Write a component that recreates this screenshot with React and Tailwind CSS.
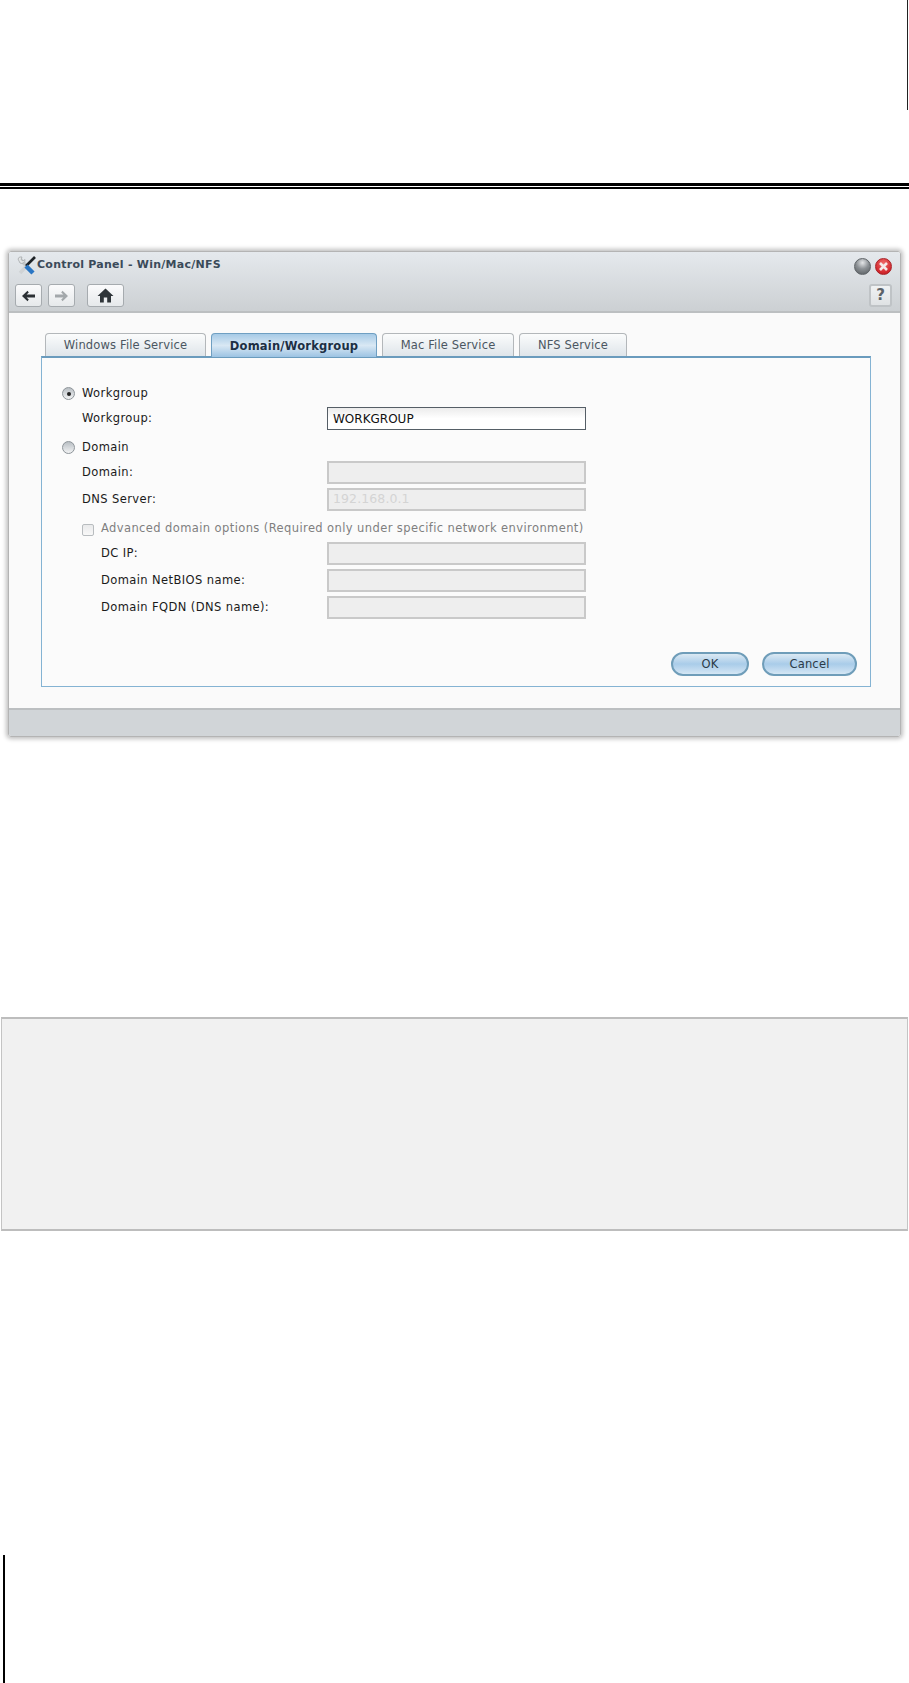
import React from "react";

const Tab = ({ label, active, w }) => (
  <div
    className={
      active
        ? "relative z-10 h-[24px] pt-[2px] flex items-center justify-center rounded-t-[4px] border border-b-0 border-[#6f9fc2] bg-gradient-to-b from-[#a6cae6] via-[#d9e8f4] to-[#9cc3e3] font-bold text-[#1c2f44] text-[11.5px] tracking-[0.2px]"
        : "h-[23px] pt-[2px] flex items-center justify-center rounded-t-[4px] border border-b-0 border-[#b3b7ba] bg-gradient-to-b from-[#fbfcfc] to-[#dfe5ea] text-[#4b5661] text-[11.5px] tracking-[0.15px]"
    }
    style={{ width: w }}
  >
    {label}
  </div>
);

const Field = ({ value, disabled }) => (
  <div
    className={
      disabled
        ? "w-[259px] h-[23px] border-2 border-[#c9c9c9] bg-[#eeeeee] px-[4px] flex items-center text-[12.5px] tracking-[0.1px] text-[#d4d4d4]"
        : "w-[259px] h-[23px] border border-[#555e66] bg-gradient-to-b from-[#ececec] via-white to-white px-[5px] flex items-center text-[12px] text-[#111]"
    }
  >
    {value}
  </div>
);

const Row = ({ label, value, disabled, indent = "pl-[40px]", mt = "mt-0" }) => (
  <div className={`flex items-center h-[23px] ${mt}`}>
    <div className={`w-[285px] ${indent} pt-px text-[11.5px] tracking-[0.4px] text-[#1a1a1a]`}>{label}</div>
    <Field value={value} disabled={disabled} />
  </div>
);

const Radio = ({ checked }) => (
  <div className="w-[13px] h-[13px] -translate-y-[2px] rounded-full border border-[#8d9499] bg-gradient-to-b from-[#b9bfc4] to-[#f2f3f4] flex items-center justify-center">
    {checked && <div className="w-[4px] h-[4px] rounded-full bg-[#222]" />}
  </div>
);

const ToolBtn = ({ w, children }) => (
  <div
    className="h-[23px] rounded-[3px] border border-[#a6abaf] bg-gradient-to-b from-[#fbfbfc] to-[#e6e9eb] flex items-center justify-center"
    style={{ width: w }}
  >
    {children}
  </div>
);

const Arrow = ({ color, flip }) => (
  <svg width="15" height="12" viewBox="0 0 15 12" className={flip ? "-scale-x-100" : ""}>
    <path d="M6.5 0.8 L1 6 L6.5 11.2 L7.8 9.6 L5.6 7.5 H14 V4.5 H5.6 L7.8 2.4 Z" fill={color} />
  </svg>
);

const Pill = ({ w, label }) => (
  <div
    className="h-[24px] pt-px rounded-full border-2 border-[#6f9db9] bg-gradient-to-b from-[#dbe9f3] via-[#a9cce9] to-[#d4e6f4] flex items-center justify-center text-[11.5px] tracking-[0.2px] text-[#2b3a47]"
    style={{ width: w }}
  >
    {label}
  </div>
);

export default function App() {
  return (
    <div className="w-[909px] h-[1683px] bg-white overflow-hidden flex flex-col" style={{ fontFamily: '"DejaVu Sans", sans-serif' }}>
      <div className="h-[110px] w-px self-end mr-[1px] bg-[#222]" />
      <div className="mt-[73px] h-[3px] bg-black" />
      <div className="mt-px h-[2px] bg-black" />

      <div className="mt-[62px] ml-[8px] w-[893px] h-[486px] rounded-[3px] border border-[#b4b4b4] shadow-[0_0_4px_2px_rgba(0,0,0,0.25)] flex flex-col overflow-hidden">
        <div className="h-[61px] shrink-0 border-b-2 border-[#bcbfc1] bg-gradient-to-b from-[#e5e9ed] to-[#ccd0d3] flex flex-col pl-[6px] pr-[8px] pt-[3px]">
          <div className="flex items-center h-[22px]">
            <svg width="19" height="20" viewBox="0 0 19 20" className="ml-[2px]">
              <path d="M3.5 3.5 L15 16" stroke="#c4c8ca" strokeWidth="3.5" />
              <path d="M3 17 L10 9.5" stroke="#d0d3d5" strokeWidth="3.5" />
              <path d="M1 3 A3.2 3.2 0 0 1 5 1 L4 3.5 L6 5 L8 3.5 A3.4 3.4 0 0 1 3 7 Z" fill="#e4e6e7" stroke="#a4a8ab" strokeWidth="0.8" />
              <path d="M18 1 L9 10" stroke="#1d2226" strokeWidth="2.6" />
              <path d="M9 10 L16 17" stroke="#2a76c4" strokeWidth="4.5" />
            </svg>
            <span className="ml-px pb-[2px] text-[11px] font-bold tracking-[0.25px] text-[#3a4a59]">Control Panel - Win/Mac/NFS</span>
            <div className="ml-auto flex items-center gap-[4px]">
              <div className="w-[17px] h-[17px] rounded-full border border-[#5f6468] bg-[radial-gradient(circle_at_50%_25%,#e4e6e8_0%,#8d9296_45%,#53585c_100%)]" />
              <div className="w-[17px] h-[17px] rounded-full border border-[#a82026] bg-[radial-gradient(circle_at_50%_30%,#ef6a6a_0%,#d3282e_70%,#a8171c_100%)] flex items-center justify-center">
                <svg width="11" height="11" viewBox="0 0 11 11">
                  <path d="M2 2 L9 9 M9 2 L2 9" stroke="#f5e9e9" strokeWidth="2.6" />
                </svg>
              </div>
            </div>
          </div>
          <div className="flex items-center mt-[7px]">
            <ToolBtn w="27px"><Arrow color="#2b3034" /></ToolBtn>
            <div className="ml-[6px]"><ToolBtn w="27px"><Arrow color="#a3a8ab" flip /></ToolBtn></div>
            <div className="ml-[12px]">
              <ToolBtn w="37px">
                <svg width="17" height="15" viewBox="0 0 17 15">
                  <path d="M8.5 0.5 L16.5 8 H14 V14.5 H10.2 V9.5 H6.8 V14.5 H3 V8 H0.5 Z" fill="#2f3539" />
                </svg>
              </ToolBtn>
            </div>
            <div className="ml-auto">
              <div className="w-[23px] h-[23px] rounded-[3px] border-2 border-[#bfc3c6] bg-gradient-to-b from-[#f0f2f3] to-[#dfe2e4] flex items-center justify-center text-[15px] font-bold text-[#5b6268]">?</div>
            </div>
          </div>
        </div>

        <div className="flex-1 bg-[#fafafa] pl-[32px] pt-[20px]">
          <div className="flex items-start gap-[5px] pl-[4px] h-[23px]">
            <Tab label="Windows File Service" w="161px" />
            <Tab label="Domain/Workgroup" w="166px" active />
            <Tab label="Mac File Service" w="132px" />
            <Tab label="NFS Service" w="108px" />
          </div>
          <div className="w-[830px] h-[331px] border border-[#84b3d3] border-t-2 border-t-[#6a9bbd] bg-[#fbfbfb] pt-[26px] flex flex-col">
            <div className="flex items-center h-[23px] pl-[20px]">
              <Radio checked />
              <span className="ml-[7px] pb-[3px] text-[11.5px] tracking-[0.4px] text-[#1a1a1a]">Workgroup</span>
            </div>
            <Row label="Workgroup:" value="WORKGROUP" />
            <div className="flex items-center h-[23px] mt-[8px] pl-[20px]">
              <Radio />
              <span className="ml-[7px] pb-[3px] text-[11.5px] tracking-[0.4px] text-[#1a1a1a]">Domain</span>
            </div>
            <Row label="Domain:" value="" disabled />
            <Row label="DNS Server:" value="192.168.0.1" disabled mt="mt-[4px]" />
            <div className="flex items-center h-[23px] mt-[7px] pl-[40px]">
              <div className="w-[12px] h-[12px] rounded-[2px] border border-[#b8bcbf] bg-gradient-to-b from-[#e9eaeb] to-[#f8f8f8]" />
              <span className="ml-[7px] pb-[2px] text-[11.5px] tracking-[0.4px] text-[#7f7f7f]">Advanced domain options (Required only under specific network environment)</span>
            </div>
            <Row label="DC IP:" value="" disabled indent="pl-[59px]" mt="mt-[1px]" />
            <Row label="Domain NetBIOS name:" value="" disabled indent="pl-[59px]" mt="mt-[4px]" />
            <Row label="Domain FQDN (DNS name):" value="" disabled indent="pl-[59px]" mt="mt-[4px]" />
            <div className="flex justify-end gap-[13px] mt-[33px] pr-[13px]">
              <Pill w="78px" label="OK" />
              <Pill w="95px" label="Cancel" />
            </div>
          </div>
        </div>

        <div className="h-[28px] shrink-0 border-t-2 border-[#bcbfc1] bg-[#d1d5d8]" />
      </div>

      <div className="mt-[280px] mx-[1px] h-[214px] border border-[#c4c4c4] border-y-2 border-y-[#bdbdbd] bg-[#f1f1f1]" />

      <div className="mt-[324px] ml-[3px] w-[2px] h-[128px] bg-black" />
    </div>
  );
}
